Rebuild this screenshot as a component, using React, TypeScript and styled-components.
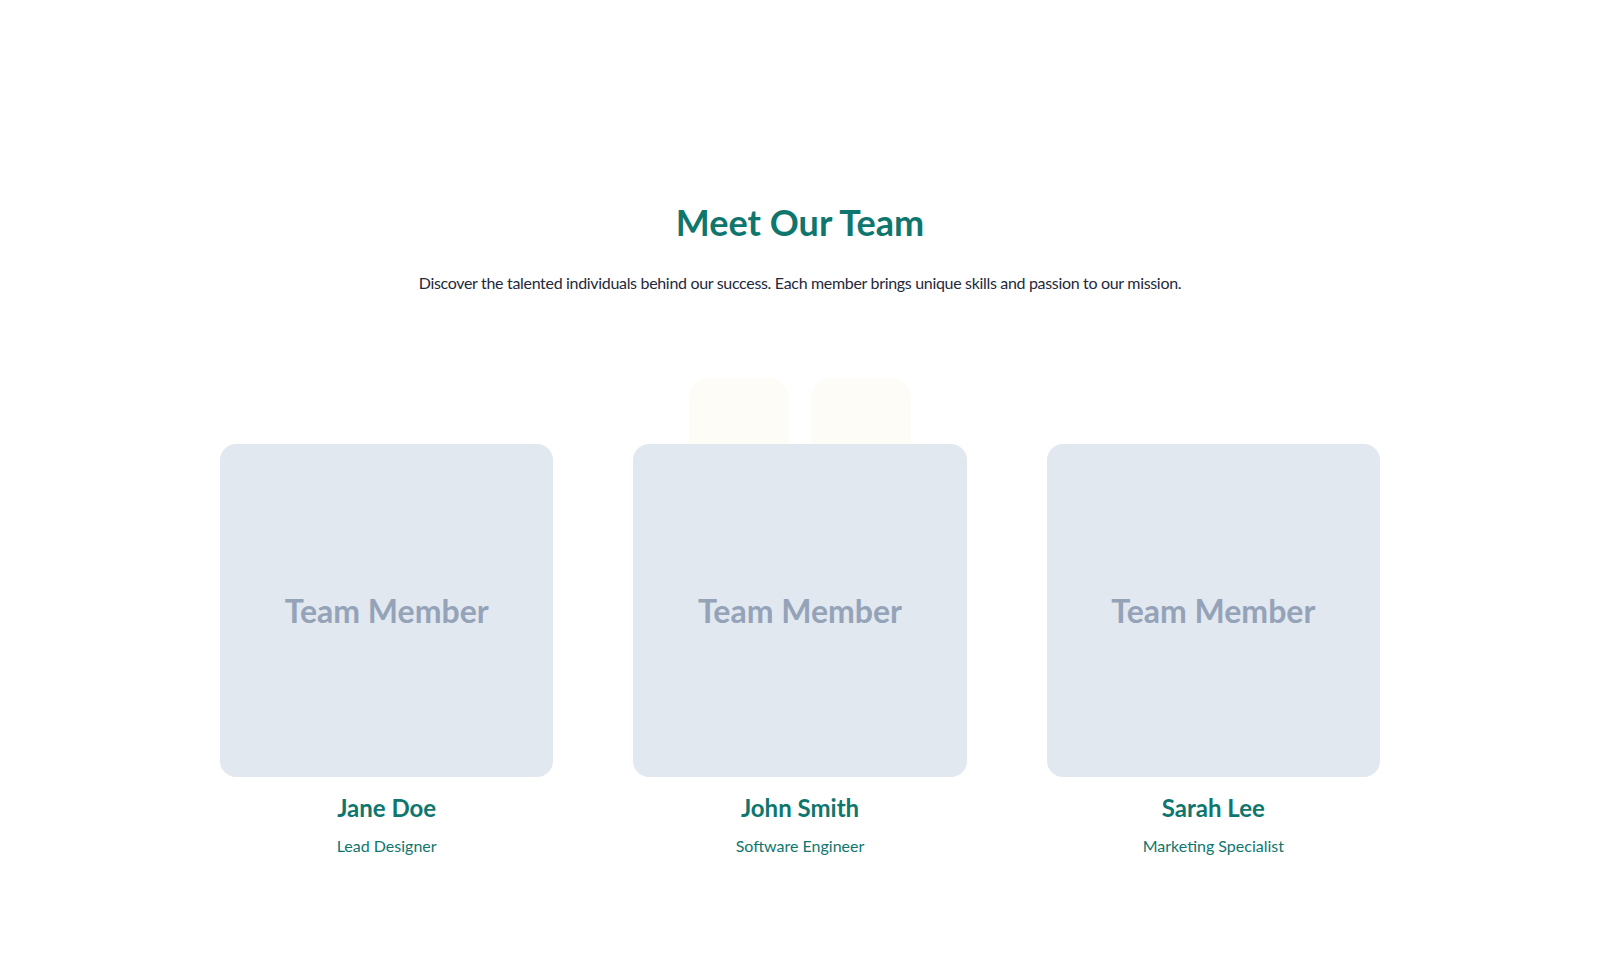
import styled, { createGlobalStyle } from 'styled-components';

const GlobalStyle = createGlobalStyle`
  body {
    margin: 0;
    background: #ffffff;
    font-family: Lato, "Liberation Sans", sans-serif;
  }
`;

const Section = styled.section`
  display: flex;
  flex-direction: column;
  align-items: center;
  padding: 201px 20px 120px;
`;

const Title = styled.h1`
  margin: 0;
  font-size: 36px;
  line-height: 43px;
  font-weight: 700;
  color: #0f766e;
`;

const Intro = styled.p`
  margin: 27px 0 0;
  font-size: 16px;
  line-height: 24px;
  letter-spacing: -0.32px;
  color: #1e293b;
`;

const Grid = styled.div`
  position: relative;
  width: 100%;
  max-width: 1160px;
  margin-top: 149px;
  display: grid;
  grid-template-columns: repeat(3, 1fr);
  column-gap: 80px;
`;

// soft shapes peeking out above the middle card
const Blobs = styled.div`
  position: absolute;
  top: -66px;
  left: 50%;
  transform: translateX(-50%);
  display: flex;
  gap: 22px;
  z-index: 0;
`;

const Blob = styled.span`
  width: 100px;
  height: 100px;
  border-radius: 20px;
  background: #fdfcf6;
`;

const Card = styled.article`
  position: relative;
  z-index: 1;
  display: flex;
  flex-direction: column;
  align-items: center;
`;

const Photo = styled.div`
  width: 100%;
  aspect-ratio: 1 / 1;
  border-radius: 16px;
  background: #e2e8f0;
  display: flex;
  align-items: center;
  justify-content: center;
  font-family: Lato, sans-serif;
  font-size: 32px;
  font-weight: 700;
  color: #94a3b8;
`;

const Name = styled.h3`
  margin: 16px 0 0;
  font-size: 24px;
  line-height: 29px;
  font-weight: 700;
  color: #0f766e;
`;

const Role = styled.p`
  margin: 12px 0 0;
  font-size: 16px;
  line-height: 24px;
  color: #0f766e;
`;

const team = [
  { name: 'Jane Doe', role: 'Lead Designer' },
  { name: 'John Smith', role: 'Software Engineer' },
  { name: 'Sarah Lee', role: 'Marketing Specialist' },
];

export default function App() {
  return (
    <>
      <GlobalStyle />
      <Section>
        <Title>Meet Our Team</Title>
        <Intro>
          Discover the talented individuals behind our success. Each member brings unique skills and passion to our mission.
        </Intro>
        <Grid>
          <Blobs>
            <Blob />
            <Blob />
          </Blobs>
          {team.map((m) => (
            <Card key={m.name}>
              <Photo>Team Member</Photo>
              <Name>{m.name}</Name>
              <Role>{m.role}</Role>
            </Card>
          ))}
        </Grid>
      </Section>
    </>
  );
}
